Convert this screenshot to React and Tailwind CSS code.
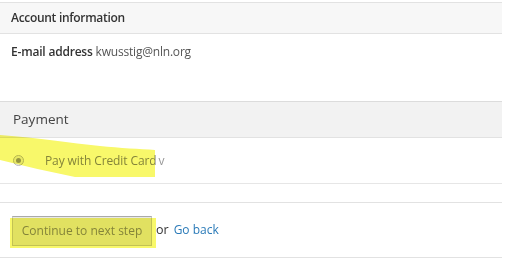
import React from "react";

export default function App() {
  return (
    <div className="relative w-[505px] h-[262px] bg-white overflow-hidden font-['Open_Sans',sans-serif] text-[#333]">
      <div className="w-[502px] pt-[2px]">
        {/* Account information */}
        <div className="border-t border-[#e2e2e2]">
          <div className="h-[31px] flex items-center px-[11px] bg-[#f7f7f7] border-b border-[#e2e2e2] text-[12px] font-semibold tracking-[-0.3px]">
            Account information
          </div>
          <div className="h-[67px] px-[11px] pt-[9px] text-[12px] tracking-[-0.2px]">
            <span className="font-semibold">E-mail address</span>{" "}
            <span className="text-[#555]">kwusstig@nln.org</span>
          </div>
        </div>
        {/* Payment */}
        <div className="border-t border-[#dcdcdc]">
          <div className="h-[36px] flex items-center px-[13px] bg-[#f2f2f2] border-b border-[#e2e2e2] text-[13.5px] text-[#444]">
            Payment
          </div>
          <div className="h-[46px] flex items-center pl-[13px] border-b border-[#e6e6e6]">
            <span className="w-[11px] h-[11px] rounded-full border border-[#bbb] bg-[#f0f0f0] flex items-center justify-center">
              <span className="w-[5px] h-[5px] rounded-full bg-[#999]" />
            </span>
            <span className="ml-[21px] text-[12px] text-[#888] tracking-[-0.1px]">
              Pay with Credit Card
            </span>
            <span className="ml-[2px] text-[12px] text-[#999]">v</span>
          </div>
        </div>
        <div className="h-[18px]" />
        <div className="border-t border-b border-[#e2e2e2] h-[56px] flex items-center pl-[12px]">
          <div className="w-[140px] h-[30px] mt-[2px] bg-[#e8e8e8] border border-[#c8c8c8] border-t-[#aaa] flex items-center justify-center text-[12px] text-[#888]">
            Continue to next step
          </div>
          <span className="ml-[4px] text-[12.5px] text-[#333]">or</span>
          <span className="ml-[5px] text-[12px] text-[#2a7ab8]">Go back</span>
        </div>
      </div>
      <svg className="absolute inset-0 pointer-events-none mix-blend-multiply" width="505" height="262">
        <path
          d="M0 135 C40 138 70 143 100 146 C120 148 140 149 155 150 L155 177 L75 177 C50 172 25 166 0 160 Z"
          fill="#f8f86a"
        />
        <rect x="10" y="218" width="146" height="30" fill="#f8f86a" />
      </svg>
    </div>
  );
}
